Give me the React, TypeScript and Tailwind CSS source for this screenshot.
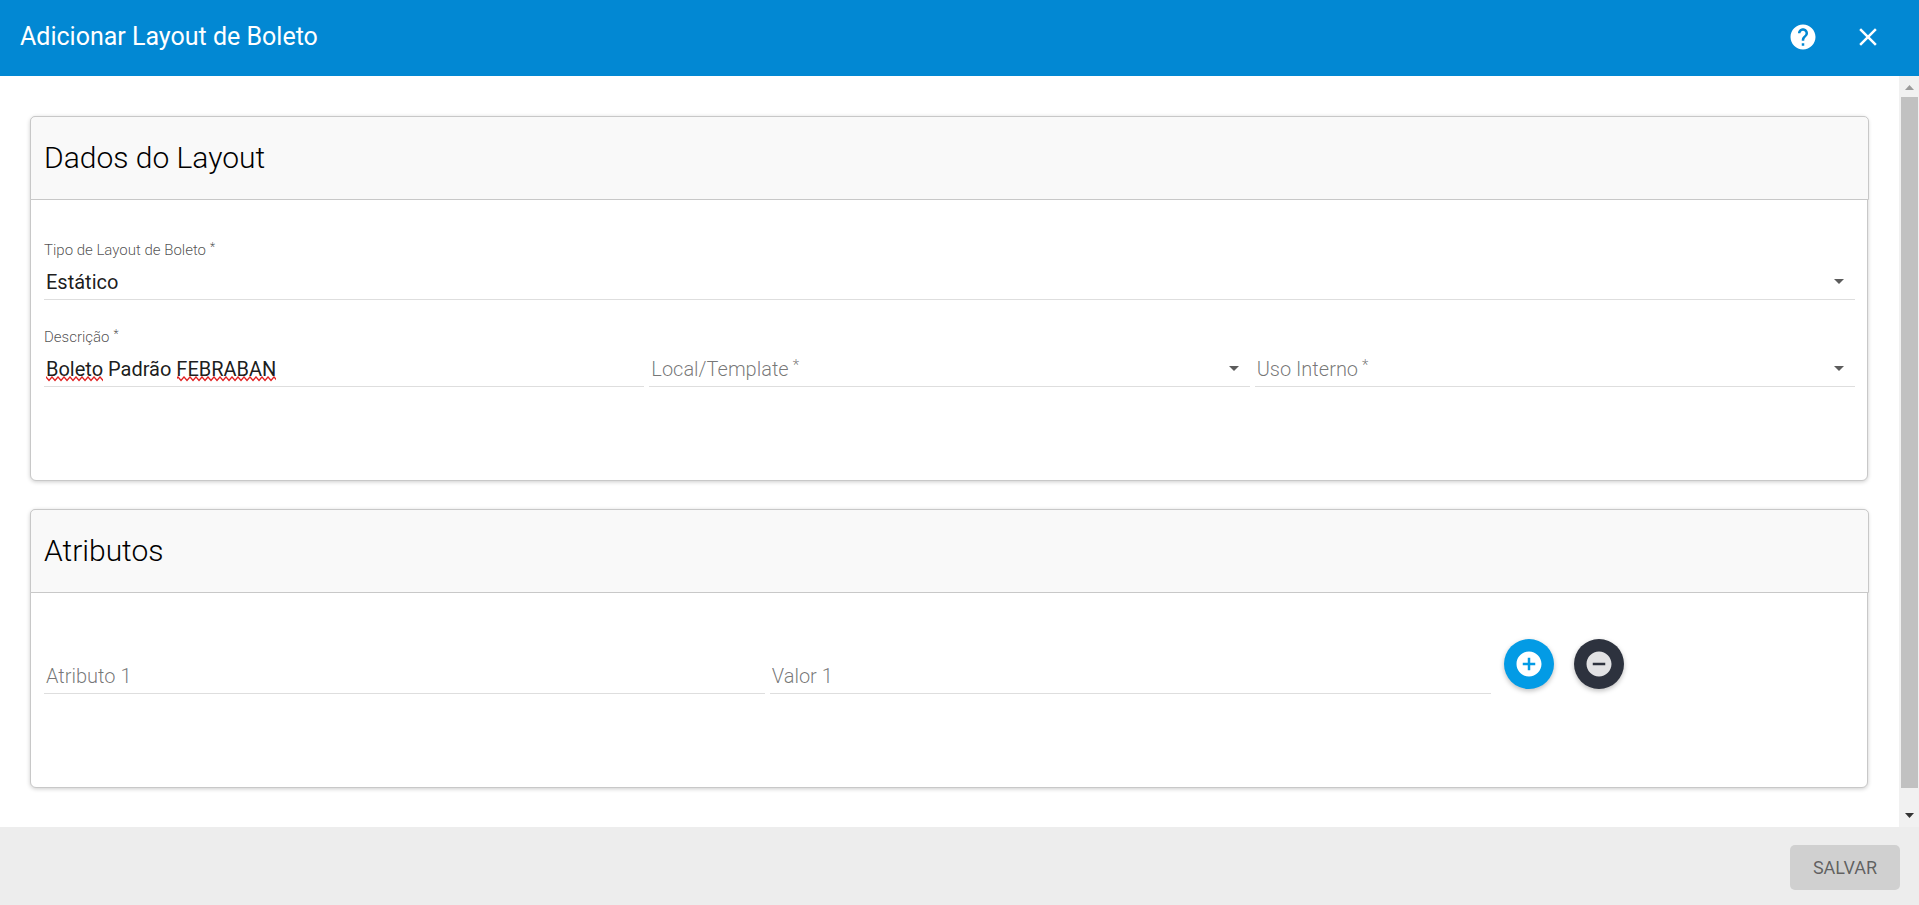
import React, { useState } from 'react';
import {
  MdAddCircle,
  MdArrowDropDown,
  MdClose,
  MdHelp,
  MdRemoveCircle,
} from 'react-icons/md';

const controlClass =
  'block h-[35px] w-full appearance-none rounded-none border-0 border-b border-[#dedede] bg-transparent pl-0.5 text-[20px] text-black/90 outline-none';

interface FieldProps {
  id: string;
  label: string;
  required?: boolean;
  floating: boolean;
  className?: string;
  children: React.ReactNode;
}

// The label floats above the control once it has a value
const Field: React.FC<FieldProps> = ({ id, label, required, floating, className, children }) => (
  <div className={`relative pt-[25px] ${className ?? ''}`}>
    <label
      htmlFor={id}
      className={
        floating
          ? 'pointer-events-none absolute top-0 left-0 text-[15px] leading-[20px] font-light text-black/70'
          : 'pointer-events-none absolute bottom-px left-0 pl-0.5 text-[20px] leading-[34px] font-light text-black/55'
      }
    >
      {label}
      {required && (
        <span className={floating ? 'pl-1 align-[4px] text-[12px] leading-none' : 'pl-1 align-[6px] text-[15px] leading-none'}>*</span>
      )}
    </label>
    {children}
  </div>
);

interface SelectFieldProps {
  id: string;
  label: string;
  options: string[];
  initial?: string;
}

const SelectField: React.FC<SelectFieldProps> = ({ id, label, options, initial = '' }) => {
  const [value, setValue] = useState(initial);

  return (
    <Field id={id} label={label} required floating={value !== ''}>
      <div className="relative">
        <select id={id} value={value} onChange={(e) => setValue(e.target.value)} className={controlClass}>
          <option value=""></option>
          {options.map((option) => (
            <option key={option} value={option}>{option}</option>
          ))}
        </select>
        <MdArrowDropDown className="pointer-events-none absolute top-1 right-1 size-6 text-[#5c5c5c]" />
      </div>
    </Field>
  );
};

interface TextFieldProps {
  id: string;
  label: string;
  required?: boolean;
  initial?: string;
  className?: string;
  children?: React.ReactNode;
}

const TextField: React.FC<TextFieldProps> = ({ id, label, required, initial = '', className, children }) => {
  const [value, setValue] = useState(initial);

  return (
    <Field id={id} label={label} required={required} floating={value !== ''} className={className}>
      <input
        id={id}
        type="text"
        value={value}
        onChange={(e) => setValue(e.target.value)}
        spellCheck={false}
        className={controlClass}
      />
      {value === initial && children}
    </Field>
  );
};

// Spelling marks under "Boleto" and "FEBRABAN"
const SpellingMarks = () => (
  <svg className="pointer-events-none absolute bottom-[5px] left-0.5" width="232" height="6" fill="none" aria-hidden="true">
    <defs>
      <pattern id="squiggle" width="6" height="6" patternUnits="userSpaceOnUse">
        <path d="M-1.5 2.75 L0 1 L3 4.5 L6 1 L7.5 2.75" stroke="#e02020" strokeWidth="1.4" />
      </pattern>
    </defs>
    <rect x="0" width="57" height="6" fill="url(#squiggle)" />
    <rect x="131" width="99" height="6" fill="url(#squiggle)" />
  </svg>
);

const Card: React.FC<{ title: string; children: React.ReactNode }> = ({ title, children }) => (
  <section className="rounded-[6px] border border-[#c8c8c8] bg-white shadow-[0_1px_4px_rgba(0,0,0,0.2)]">
    <h2 className="-mt-px -mr-[2px] -ml-px rounded-t-[5px] border border-[#c8c8c8] bg-[#f9f9f9] px-[13px] py-[21px] text-[30px] leading-[40px] font-light text-black">
      {title}
    </h2>
    <div className="pt-10 pr-3 pb-[93px] pl-[13px]">{children}</div>
  </section>
);

const ScrollBar = () => (
  <div className="flex w-5 shrink-0 flex-col items-center bg-[#f1f1f1]" aria-hidden="true">
    <svg className="h-[21px] w-5 shrink-0" viewBox="0 0 20 21">
      <path d="M6 14 L10.5 9 L15 14 Z" fill="#9b9b9b" />
    </svg>
    <div className="ml-px w-[17px] flex-1 bg-[#c1c1c1]"></div>
    <svg className="mt-[18px] h-[21px] w-5 shrink-0" viewBox="0 0 20 21">
      <path d="M6 7 L15 7 L10.5 12 Z" fill="#333333" />
    </svg>
  </div>
);

const App: React.FC = () => {
  return (
    <div className="flex h-screen flex-col bg-white font-['Roboto',sans-serif]">
      <header className="flex h-19 shrink-0 items-center bg-[#0288d3] pr-9 pb-[3px] pl-5 text-white">
        <h1 className="flex-1 text-[25px] leading-[30px]">Adicionar Layout de Boleto</h1>
        <button type="button" aria-label="Ajuda">
          <MdHelp className="size-[30px]" />
        </button>
        <button type="button" aria-label="Fechar" className="ml-[35px]">
          <MdClose className="size-[30px]" />
        </button>
      </header>

      <div className="flex min-h-0 flex-1">
        <main className="min-w-0 flex-1 space-y-7 overflow-hidden pt-10 pr-[31px] pl-[30px]">
          <Card title="Dados do Layout">
            <div className="space-y-[27px]">
              <SelectField id="tipo" label="Tipo de Layout de Boleto" options={['Estático', 'Dinâmico']} initial="Estático" />
              <div className="grid grid-cols-3 gap-[5px]">
                <TextField id="descricao" label="Descrição" required initial="Boleto Padrão FEBRABAN">
                  <SpellingMarks />
                </TextField>
                <SelectField id="template" label="Local/Template" options={['Local', 'Template']} />
                <SelectField id="uso" label="Uso Interno" options={['Sim', 'Não']} />
              </div>
            </div>
          </Card>

          <Card title="Atributos">
            <div className="flex items-center gap-[5px] pt-px">
              <TextField id="atributo-1" label="Atributo 1" className="w-[39.8%]" />
              <TextField id="valor-1" label="Valor 1" className="w-[39.8%]" />
              <div className="flex gap-5 pl-2">
                <button
                  type="button"
                  aria-label="Adicionar atributo"
                  className="flex size-[50px] items-center justify-center rounded-full bg-[#039be5] text-white shadow-[0_2px_5px_rgba(0,0,0,0.26)]"
                >
                  <MdAddCircle className="size-[30px]" />
                </button>
                <button
                  type="button"
                  aria-label="Remover atributo"
                  className="flex size-[50px] items-center justify-center rounded-full bg-[#2d323e] text-[#e2e2e4] shadow-[0_2px_5px_rgba(0,0,0,0.26)]"
                >
                  <MdRemoveCircle className="size-[30px]" />
                </button>
              </div>
            </div>
          </Card>
        </main>
        <ScrollBar />
      </div>

      <footer className="flex h-[78px] shrink-0 items-center justify-end bg-[#ededed] pt-[3px] pr-[19px]">
        <button type="button" disabled className="h-[45px] w-[110px] rounded-[5px] bg-[#d0d0d0] text-[18px] text-black/55">
          SALVAR
        </button>
      </footer>
    </div>
  );
};

export default App;
